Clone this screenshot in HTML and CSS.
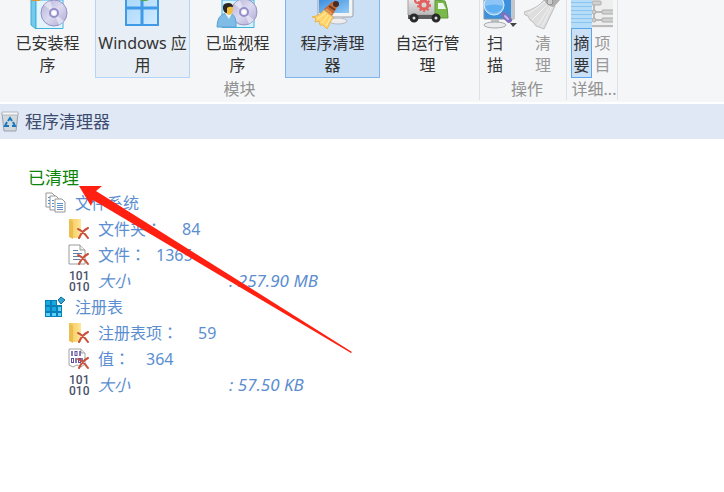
FILE: index.html
```html
<!DOCTYPE html>
<html lang="zh-CN">
<head>
    <meta charset="UTF-8">
    <meta name="viewport" content="width=device-width, initial-scale=1.0">
    <title>程序清理器</title>
    <link rel="stylesheet" href="styles.css">
</head>
<body>
    <!-- Shared icons -->
    <svg class="defs" width="0" height="0" aria-hidden="true">
        <defs>
            <linearGradient id="folder-fill" x1="0" x2="1"><stop offset="0" stop-color="#f3c650"/><stop offset="1" stop-color="#ffe69b"/></linearGradient>
            <linearGradient id="disc-fill" x1="0" x2="1" y2="1"><stop offset="0" stop-color="#b3b0d8"/><stop offset=".5" stop-color="#dcdaf0"/><stop offset="1" stop-color="#a9a6d2"/></linearGradient>
            <linearGradient id="pane-fill" x1="0" x2="1" y2="1"><stop offset="0" stop-color="#a6d6fb"/><stop offset="1" stop-color="#d2ebff"/></linearGradient>
            <linearGradient id="screen-fill" x1="0" x2="1" y2="1"><stop offset="0" stop-color="#3d8fe0"/><stop offset="1" stop-color="#93cbf6"/></linearGradient>
            <linearGradient id="box-fill" x1="0" x2="0" y2="1"><stop offset="0" stop-color="#ececec"/><stop offset="1" stop-color="#b9b9b9"/></linearGradient>
            <symbol id="cross" viewBox="0 0 12 12">
                <path d="M1 2 Q6 4 11 11 M11 1 Q5 4 2 11" fill="none" stroke="#c9513c" stroke-width="2" stroke-linecap="round"/>
            </symbol>
            <symbol id="disc" viewBox="0 0 28 28">
                <circle cx="14" cy="14" r="13" fill="url(#disc-fill)" stroke="#9492c2"/>
                <path d="M14 14 L4 6 A13 13 0 0 1 10 2Z M14 14 L24 22 A13 13 0 0 1 19 26Z" fill="#f4f3fc" opacity=".6"/>
                <circle cx="14" cy="14" r="4" fill="#eeeefa" stroke="#9390c8" stroke-width="2"/>
                <circle cx="14" cy="14" r="2" fill="#fff"/>
            </symbol>
            <symbol id="folder-del" viewBox="0 0 22 22">
                <path d="M1 1 H13 V20 H5 L1 18Z" fill="url(#folder-fill)"/>
                <path d="M1 1 L5 4 V21 L1 19Z" fill="#ecbd4c"/>
                <use href="#cross" x="9" y="9" width="12" height="12"/>
            </symbol>
            <symbol id="file-del" viewBox="0 0 22 22">
                <path d="M1 1 H12 L17 6 V20 H1Z" fill="#fff" stroke="#9a9a9a"/>
                <path d="M12 1 V6 H17" fill="#eee" stroke="#9a9a9a"/>
                <path d="M5 6.500 H10 M5 9.500 H14 M5 12.500 H13 M5 15.500 H12" stroke="#5d80a5"/>
                <use href="#cross" x="9" y="9" width="12" height="12"/>
            </symbol>
            <symbol id="binary" viewBox="0 0 22 22">
                <g class="bits">
                    <text x="1" y="10">101</text>
                    <text x="1" y="21">010</text>
                </g>
            </symbol>
            <symbol id="value-del" viewBox="0 0 22 22">
                <path d="M1 1 H13 L17 5 V16 L13 19 L9 17 L5 19 L1 17Z" fill="#fff" stroke="#a3a3a3"/>
                <path d="M13 1 V5 H17" fill="#eee" stroke="#a3a3a3"/>
                <path d="M4 3 V8 M12 3 V8 M8 10 V15 M14 10 V14" stroke="#5a4fa0" stroke-width="1.500"/>
                <g fill="none" stroke="#5a4fa0"><rect x="7" y="3.500" width="2" height="4"/><rect x="3.500" y="10.500" width="2" height="4"/><rect x="10.500" y="10.500" width="2" height="4"/></g>
                <use href="#cross" x="9" y="9" width="12" height="12"/>
            </symbol>
        </defs>
    </svg>

    <header class="ribbon">
        <section class="group modules">
            <div class="buttons">
                <button class="tile" type="button">
                    <svg class="icon" width="40" height="30" viewBox="0 0 40 30">
                        <path d="M3 0 V25 L8 29 V0Z" fill="#74caeb" stroke="#43a9d8"/>
                        <path d="M8 0 H35 V28.500 H8Z" fill="#e3f4fd" stroke="#3fb2e2"/>
                        <path d="M2 0 H13 L11 1 H5Z" fill="#e5932b"/>
                        <use href="#disc" x="12" y="-1" width="28" height="28"/>
                    </svg>
                    <span class="label">已安装程序</span>
                </button>
                <button class="tile hover" type="button">
                    <svg class="icon" width="40" height="30" viewBox="0 0 40 30">
                        <path d="M3 -5 H35 V25 H3Z" fill="url(#pane-fill)" stroke="#3f9ae8" stroke-width="2"/>
                        <path d="M19 0 V25 M3 8 H35" stroke="#3f9ae8" stroke-width="3"/>
                        <path d="M17 0 H26 L23 1 H19Z" fill="#50a83c"/>
                    </svg>
                    <span class="label full">Windows 应用</span>
                </button>
                <button class="tile" type="button">
                    <svg class="icon" width="44" height="30" viewBox="0 0 44 30">
                        <path d="M6 0 H38 V27.500 H6Z" fill="#d9f1fb" stroke="#3fb2e2"/>
                        <use href="#disc" x="14" y="-2" width="28" height="28"/>
                        <path d="M1 27 Q1 15 10 13 H15 Q21 17 20 27Z" fill="#80bde6" stroke="#5b9fd2"/>
                        <path d="M9 13 L13 19 L16 13Z" fill="#eaf6ff"/>
                        <ellipse cx="13" cy="9" rx="4" ry="6" fill="#f4bf3e"/>
                        <path d="M7 9 Q6 3 12 3 Q17 3 17 7 Q13 6 11 8 V13 Q8 13 7 9Z" fill="#2b2722"/>
                    </svg>
                    <span class="label">已监视程序</span>
                </button>
                <button class="tile active" type="button">
                    <svg class="icon" width="42" height="30" viewBox="0 0 42 30">
                        <path d="M6 -4 H41 V15 Q41 17 39 17 H6Z" fill="#f2f3f5" stroke="#9ba0a8"/>
                        <path d="M7 0 H37 V13 H7Z" fill="url(#screen-fill)"/>
                        <path d="M23 17 H30 V21 H23Z" fill="#d2d4d8"/>
                        <ellipse cx="26" cy="21" rx="9" ry="3" fill="#ededf0" stroke="#b4b8be"/>
                        <path d="M12 10 L21 17 L15 29 L11 25 L8 25 L7 21 L3 22 L4 18 L0 17 Q8 16 12 10Z" fill="#ffd56a" stroke="#edb44c"/>
                        <path d="M14 13 L5 19 M16 15 L10 23 M19 17 L14 26" stroke="#ffeeb0"/>
                        <path d="M12 9 L20 2 Q26 0 27 4 L20 16Z" fill="#c46a38"/>
                        <path d="M14 9 L20 14" stroke="#e89a50" stroke-width="2"/>
                        <path d="M17 6 L23 10" stroke="#6e3823" stroke-width="2"/>
                        <circle cx="24" cy="4" r="3" fill="#4a2a25"/>
                    </svg>
                    <span class="label">程序清理器</span>
                </button>
                <button class="tile" type="button">
                    <svg class="icon" width="42" height="30" viewBox="0 0 42 30">
                        <path d="M1 -2 H29 V15 H1Z" fill="url(#box-fill)" stroke="#a2a2a2"/>
                        <path d="M28 0 L38 1 Q41 8 41 18 H28Z" fill="#7ab84c" stroke="#5c9936"/>
                        <path d="M31 3 H36 L39 9 H31Z" fill="#eef7ee"/>
                        <path d="M1 15 H28 V19 H1Z" fill="#5c5c5c"/>
                        <g fill="none" stroke="#e2615f">
                            <circle cx="17" cy="5" r="4" stroke-width="3"/>
                            <circle cx="17" cy="5" r="6" stroke-width="2" stroke-dasharray="2 2"/>
                            <circle cx="11" cy="0" r="3" stroke-width="2"/>
                        </g>
                        <g fill="#ddd" stroke="#29292b" stroke-width="3"><circle cx="7" cy="18" r="3"/><circle cx="29" cy="18" r="3"/></g>
                    </svg>
                    <span class="label">自运行管理</span>
                </button>
            </div>
            <h2 class="caption">模块</h2>
        </section>

        <section class="group actions">
            <div class="buttons">
                <button class="tool scan" type="button">
                    <svg class="icon" width="34" height="30" viewBox="0 0 34 30">
                        <path d="M1 -2 H31 V19 H1Z" fill="#3c91dc" stroke="#89929d"/>
                        <path d="M28 0 H31 V19 H28Z" fill="#c2c6cb"/>
                        <circle cx="11" cy="5" r="10" fill="#8dc5f6" stroke="#d8edfc"/>
                        <path d="M2 6 Q11 3 20 6 Q18 13 11 13 Q4 13 2 6Z" fill="#5fb0f2"/>
                        <path d="M8 19 H16 V24 H8Z" fill="#bcbfc3"/>
                        <ellipse cx="12" cy="25" rx="11" ry="3" fill="#ececee" stroke="#a5a8ad"/>
                        <path d="M21 15 L26 20" stroke="#8070bc" stroke-width="6" stroke-linecap="round"/>
                        <path d="M22 16 L25 19" stroke="#c5baf0" stroke-width="2" stroke-linecap="round"/>
                        <path d="M27 23 H34 L30 27Z" fill="#444"/>
                    </svg>
                    <span class="label narrow">扫描</span>
                </button>
                <button class="tool clean" type="button">
                    <svg class="icon" width="38" height="30" viewBox="0 0 38 30">
                        <path d="M20 0 L31 6 L20 29 L15 27 L12 26 L9 22 L6 20 L4 16 L1 15 L0 12 Q14 8 20 0Z" fill="#dedede" stroke="#c0c0c0"/>
                        <path d="M21 2 L4 14 M24 4 L8 20 M26 6 L14 25 M28 6 L18 27" stroke="#f1f1f1"/>
                        <path d="M20 0 H36 L30 7 Q24 7 20 0Z" fill="#b0b0b0"/>
                        <circle cx="26" cy="2" r="3" fill="#ccc" stroke="#909090"/>
                    </svg>
                    <span class="label narrow">清理</span>
                </button>
            </div>
            <h2 class="caption">操作</h2>
        </section>

        <section class="group details">
            <div class="buttons">
                <button class="view selected" type="button">
                    <svg width="21" height="28" viewBox="0 0 21 28">
                        <path d="M0 0 H21 V28 H0Z" fill="#b5dcf8"/>
                        <path d="M0 2.500 H21 M0 6.500 H21 M0 10.500 H21 M0 14.500 H21 M0 18.500 H21 M0 22.500 H21" stroke="#8cc4ed"/>
                    </svg>
                    <span class="label">摘要</span>
                </button>
                <button class="view" type="button">
                    <svg width="21" height="28" viewBox="0 0 21 28">
                        <path d="M0 0 H21 V28 H0Z" fill="#eee"/>
                        <path d="M2 3 V20 M2 12 H11 M2 20 H11 M0 26 H21" fill="none" stroke="#bbb" stroke-width="2"/>
                        <g fill="#d0d0d0" stroke="#acacac"><rect x="0" y="1" width="9" height="4" rx="1"/><rect x="10" y="10" width="13" height="4" rx="1"/><rect x="10" y="18" width="13" height="4" rx="1"/><circle cx="2" cy="12" r="2"/><circle cx="2" cy="20" r="2"/></g>
                    </svg>
                    <span class="label">项目</span>
                </button>
            </div>
            <h2 class="caption">详细...</h2>
        </section>
    </header>

    <div class="titlebar">
        <svg width="18" height="22" viewBox="0 0 18 22" aria-hidden="true">
            <path d="M1 2 H17 L15 20 H3Z" fill="#d3d8dc" stroke="#9aa1a9"/>
            <path d="M1 1 H17 V4 H1Z" fill="#f6f7f8" stroke="#b4b9be"/>
            <path d="M7 10 L9 7 L11 10 M12 11 L14 15 H11 M8 15 H4 L6 11" fill="none" stroke="#1778c0" stroke-width="2"/>
        </svg>
        <h1>程序清理器</h1>
    </div>

    <main class="report">
        <h2 class="status">已清理</h2>
        <ul class="tree">
            <li>
                <div class="row">
                    <svg width="22" height="22" viewBox="0 0 22 22">
                        <g fill="#fff" stroke="#969696">
                            <path d="M1 1 H7 L10 4 V15 H1Z"/>
                            <path d="M5 4 H11 L14 7 V18 H5Z"/>
                            <path d="M10 7 H17 L20 10 V20 H10Z"/>
                        </g>
                        <path d="M3 5.500 H5 M3 8.500 H5 M3 11.500 H5 M7 8.500 H9 M7 11.500 H9 M7 14.500 H9 M12 11.500 H18 M12 13.500 H18 M12 15.500 H18 M12 17.500 H18" stroke="#5c91c5"/>
                    </svg>
                    <span>文件系统</span>
                </div>
                <ul>
                    <li class="row"><svg width="22" height="22"><use href="#folder-del"/></svg><span>文件夹<span class="colon" lang="zh-TW">：</span></span><span class="value wide">84</span></li>
                    <li class="row"><svg width="22" height="22"><use href="#file-del"/></svg><span>文件<span class="colon" lang="zh-TW">：</span></span><span class="value">1365</span></li>
                    <li class="row"><svg width="22" height="22"><use href="#binary"/></svg><span class="size-name">大小</span><span class="size-value">: 257.90 MB</span></li>
                </ul>
            </li>
            <li>
                <div class="row">
                    <svg width="22" height="22" viewBox="0 0 22 22">
                        <path d="M0 4 H12 V9 H17 V21 H0Z" fill="#087fb9"/>
                        <g fill="#18a9e0"><path d="M1 5 H5 V9 H1Z M7 5 H11 V9 H7Z M1 11 H5 V15 H1Z M7 11 H11 V15 H7Z"/></g>
                        <path d="M13 11 H16 V15 H13Z M1 17 H5 V20 H1Z M7 17 H11 V20 H7Z M13 17 H16 V20 H13Z" fill="#5dd1fa"/>
                        <path d="M16 1 L20 4 L16 8 L13 4Z" fill="#35a4cf" stroke="#0b6e9c"/>
                    </svg>
                    <span>注册表</span>
                </div>
                <ul>
                    <li class="row"><svg width="22" height="22"><use href="#folder-del"/></svg><span>注册表项<span class="colon" lang="zh-TW">：</span></span><span class="value wide">59</span></li>
                    <li class="row"><svg width="22" height="22"><use href="#value-del"/></svg><span>值<span class="colon" lang="zh-TW">：</span></span><span class="value medium">364</span></li>
                    <li class="row"><svg width="22" height="22"><use href="#binary"/></svg><span class="size-name">大小</span><span class="size-value">: 57.50 KB</span></li>
                </ul>
            </li>
        </ul>
        <!-- Arrow pointing at the status line -->
        <svg class="arrow" width="274" height="170" viewBox="79 185 274 170" aria-hidden="true">
            <path d="M79 186 L102 186 L96 191 L352 352 L351 353 L93 200 L91 206Z" fill="#ff2012"/>
        </svg>
    </main>
</body>
</html>
```

FILE: styles.css
```css
* {
    box-sizing: border-box;
}
body {
    margin: 0;
    font-family: "Noto Sans", "Noto Sans CJK SC", sans-serif;
    font-size: 16px;
    background: #fff;
    color: #333;
}
h1, h2 {
    margin: 0;
    font-weight: normal;
}
ul {
    list-style: none;
    margin: 0;
    padding: 0;
}
svg {
    display: block;
    flex-shrink: 0;
}
.defs {
    position: absolute;
}
.bits {
    font-family: Roboto, sans-serif;
    font-size: 12px;
    font-weight: 500;
    fill: #4c5169;
}

/* Ribbon */
.ribbon {
    display: flex;
    background: #f5f6f8;
    padding-bottom: 2px;
    border-bottom: 2px solid #fff;
}
.group {
    border-right: 1px solid #dfe1e4;
}
.buttons {
    display: flex;
}
.modules .buttons {
    padding-right: 4px;
}
button {
    display: flex;
    flex-direction: column;
    align-items: center;
    padding: 0 0 1px;
    border: 1px solid transparent;
    border-top: none;
    background: none;
    color: inherit;
    font: inherit;
    cursor: pointer;
}
.tile {
    width: 95px;
}
.icon {
    height: 30px;
}
.label {
    width: 100%;
    margin-top: 2px;
    padding: 0 12px;
    line-height: 22px;
    text-align: center;
}
.full {
    padding: 0;
}
.narrow {
    width: 16px;
    padding: 0;
}
.hover {
    background: #e8eef5;
    border-color: #b5d5f7;
}
.active {
    background: #cbdff5;
    border-color: #7fb3ec;
}
.scan {
    width: 40px;
}
.scan .label {
    margin-right: 10px;
}
.clean {
    width: 46px;
}
.clean, .view {
    color: #999;
}
.actions .caption {
    padding-left: 8px;
}
.details {
    width: 51px;
    padding-left: 4px;
}
.view {
    width: 21px;
    padding: 0;
    border: none;
}
.view .label {
    margin: 0;
    padding: 3px 1px 1px;
    border: 1px solid transparent;
}
.selected {
    color: #333;
}
.selected .label {
    background: #cbdff5;
    border-color: #5ba5ea;
}
.caption {
    font-size: 16px;
    line-height: 22px;
    text-align: center;
    color: #929292;
    white-space: nowrap;
}

.titlebar {
    display: flex;
    align-items: center;
    gap: 6px;
    height: 35px;
    padding-left: 1px;
    background: #dfe8f4;
    color: #3c4b6e;
}
.titlebar h1 {
    font-size: 17px;
    line-height: 26px;
}

/* Cleaning report */
.report {
    position: relative;
    padding: 26px 0 26px 28px;
}
.status {
    font-size: 17px;
    line-height: 25px;
    color: #0b860b;
}
.tree {
    padding-left: 17px;
    line-height: 26px;
    color: #5b8ed0;
}
.tree ul {
    padding-left: 23px;
}
.row {
    display: flex;
    align-items: center;
    height: 26px;
}
.row svg {
    margin-right: 8px;
}
.colon {
    font-family: "Noto Sans CJK TC", sans-serif;
    line-height: 20px;
}
.value {
    margin-left: 10px;
}
.medium {
    margin-left: 16px;
}
.wide {
    margin-left: 20px;
}
.size-name {
    width: 131px;
    font-style: italic;
}
.size-value {
    font-size: 17px;
    font-style: italic;
}
.arrow {
    position: absolute;
    left: 79px;
    top: 46px;
}
```
